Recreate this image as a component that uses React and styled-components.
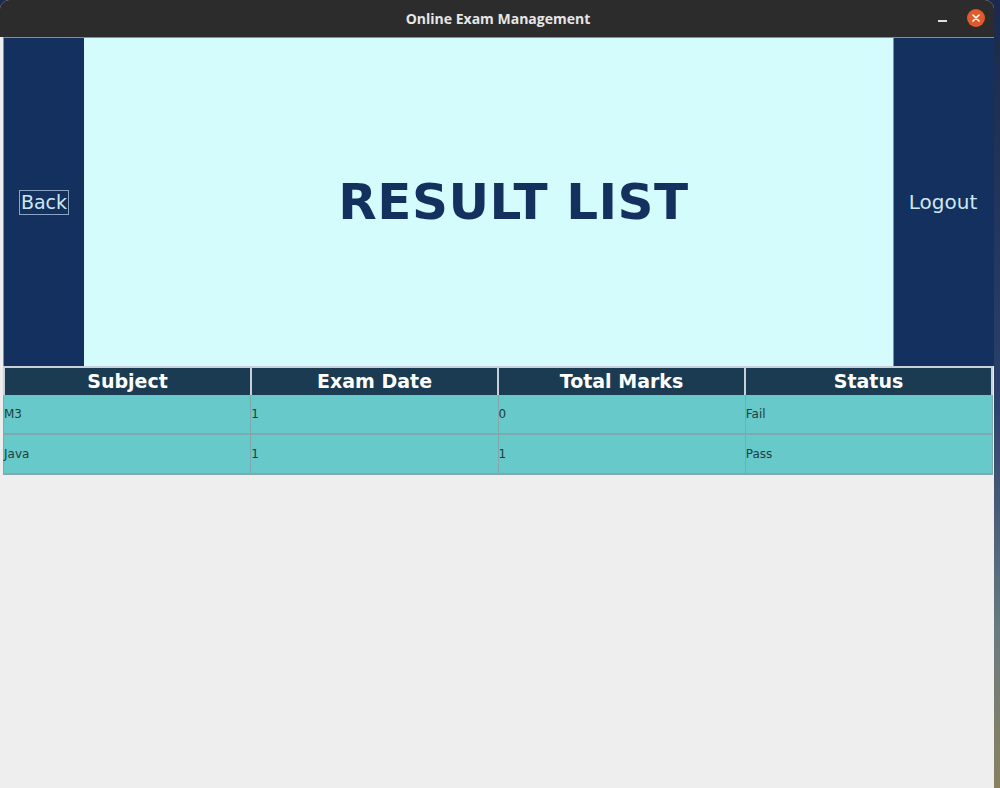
import React from 'react';
import styled, { createGlobalStyle } from 'styled-components';

const results = [
  { subject: 'M3', date: '1', marks: '0', status: 'Fail' },
  { subject: 'Java', date: '1', marks: '1', status: 'Pass' },
];

const columns = ['Subject', 'Exam Date', 'Total Marks', 'Status'];

export default function App() {
  return (
    <>
      <GlobalStyle />
      <Desktop>
        <Window>
          <TitleBar>
            <TitleText>Online Exam Management</TitleText>
            <WindowControls>
              <Minimize />
              <CloseButton>
                <svg width="10" height="10" viewBox="0 0 10 10">
                  <path d="M2 2 L8 8 M8 2 L2 8" stroke="#fff" strokeWidth="1.6" strokeLinecap="round" />
                </svg>
              </CloseButton>
            </WindowControls>
          </TitleBar>
          <Content>
            <Header>
              <SideBar>
                <BackButton>Back</BackButton>
              </SideBar>
              <Banner>
                <BannerTitle>RESULT LIST</BannerTitle>
              </Banner>
              <SideBar $wide>
                <LogoutButton>Logout</LogoutButton>
              </SideBar>
            </Header>
            <Table>
              <HeadRow>
                {columns.map(c => (
                  <HeadCell key={c}>{c}</HeadCell>
                ))}
              </HeadRow>
              {results.map(r => (
                <Row key={r.subject}>
                  <Cell>{r.subject}</Cell>
                  <Cell>{r.date}</Cell>
                  <Cell>{r.marks}</Cell>
                  <Cell>{r.status}</Cell>
                </Row>
              ))}
            </Table>
          </Content>
        </Window>
      </Desktop>
    </>
  );
}

const GlobalStyle = createGlobalStyle`
  html, body {
    margin: 0;
    padding: 0;
    height: 100%;
    overflow: hidden;
  }
  body {
    font-family: "DejaVu Sans", "Liberation Sans", sans-serif;
  }
`;

const Desktop = styled.div`
  width: 1000px;
  height: 788px;
  padding: 0 6px 0 0;
  box-sizing: border-box;
  background: linear-gradient(180deg, #1b2a4c 0%, #2a3f6a 50%, #6a7a80 80%, #8a8060 100%);
  overflow: hidden;
`;

const Window = styled.div`
  display: flex;
  flex-direction: column;
  height: 100%;
  background: #eeeeee;
  border-radius: 9px 9px 0 0;
  overflow: hidden;
`;

const TitleBar = styled.div`
  position: relative;
  display: flex;
  align-items: center;
  justify-content: center;
  height: 37px;
  flex-shrink: 0;
  background: #2c2c2c;
`;

const TitleText = styled.span`
  color: #e6e6e6;
  font-family: "Open Sans", "Liberation Sans", sans-serif;
  font-weight: 700;
  font-size: 14px;
  padding-left: 2px;
`;

const WindowControls = styled.div`
  position: absolute;
  right: 9px;
  top: 9px;
  display: flex;
  align-items: center;
  gap: 20px;
`;

const Minimize = styled.span`
  display: block;
  width: 9px;
  height: 2px;
  margin-top: 6px;
  background: #e0e0e0;
`;

const CloseButton = styled.span`
  display: flex;
  align-items: center;
  justify-content: center;
  width: 18px;
  height: 18px;
  border-radius: 50%;
  background: #e05a2c;
`;

const Content = styled.div`
  display: flex;
  flex-direction: column;
  flex: 1;
  margin-left: 3px;
  background: #eeeeee;
`;

const Header = styled.div`
  display: flex;
  height: 329px;
  flex-shrink: 0;
  border-top: 1px solid #7d8fae;
  box-sizing: border-box;
`;

const SideBar = styled.div`
  display: flex;
  align-items: center;
  justify-content: center;
  width: ${props => (props.$wide ? '101px' : '81px')};
  background: #13305f;
  border-left: 1px solid #7d8fae;
  box-sizing: border-box;
`;

const Banner = styled.div`
  display: flex;
  flex: 1;
  align-items: center;
  justify-content: center;
  background: #d5fcfc;
`;

const BannerTitle = styled.h1`
  margin: 0 0 0 50px;
  color: #14305e;
  font-size: 50px;
  font-weight: 700;
  letter-spacing: 0.5px;
`;

const BackButton = styled.span`
  padding: 0 1px;
  color: #cfe8f2;
  font-size: 19px;
  line-height: 23px;
  border: 1px solid #8ba3c4;
`;

const LogoutButton = styled.span`
  color: #cfe8f2;
  font-size: 20px;
  margin-right: 2px;
`;

const Table = styled.div`
  display: flex;
  flex-direction: column;
  width: 990px;
  border-top: 2px solid #c8d0d8;
`;

const HeadRow = styled.div`
  display: grid;
  grid-template-columns: repeat(4, 1fr);
  height: 27px;
  background: #1b3b53;
  border-left: 2px solid #c8d0d8;
`;

const HeadCell = styled.div`
  display: flex;
  align-items: center;
  justify-content: center;
  color: #ffffff;
  font-size: 19px;
  font-weight: 700;
  padding-bottom: 1px;
  border-right: 2px solid #c8d0d8;
`;

const Row = styled.div`
  display: grid;
  grid-template-columns: repeat(4, 1fr);
  height: 40px;
  background: #67c9c9;
  border-bottom: 2px solid #7fa9ac;
  box-sizing: border-box;
  border-left: 1px solid #7fa9ac;
`;

const Cell = styled.div`
  display: flex;
  align-items: center;
  color: #1f3d3d;
  font-size: 12px;
  border-right: 1px solid #7fa9ac;
`;
